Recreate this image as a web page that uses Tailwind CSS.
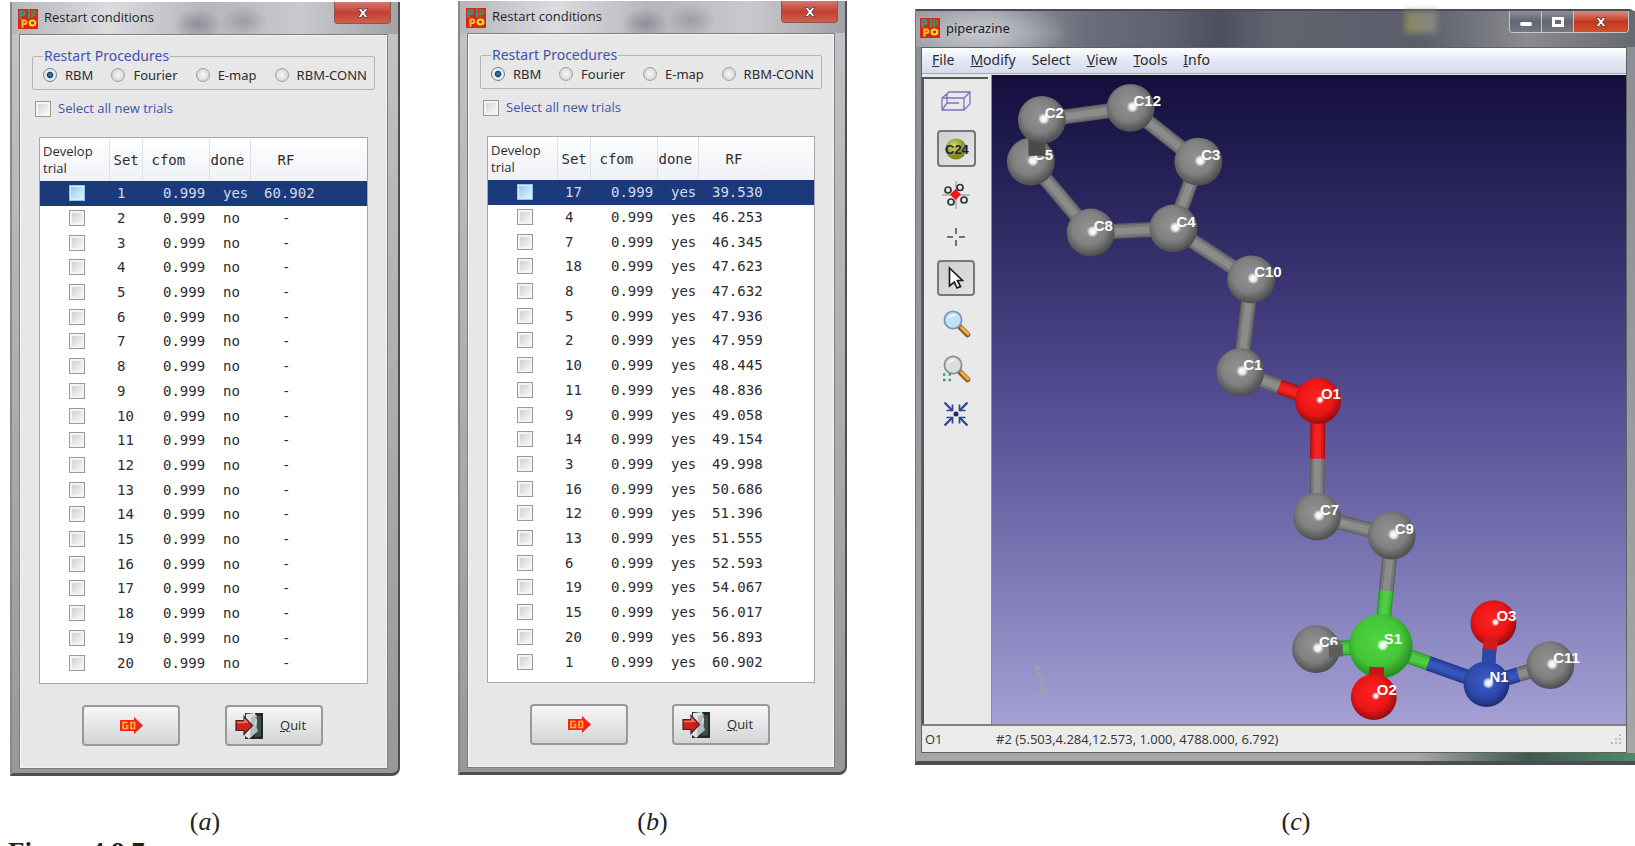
<!DOCTYPE html>
<html lang="en">
<head>
<meta charset="utf-8">
<title>Restart conditions and piperazine viewer</title>
<script src="https://cdn.jsdelivr.net/npm/@tailwindcss/browser@4"></script>
</head>
<body class="h-screen overflow-hidden bg-white font-['Open_Sans',sans-serif] text-[13px] text-[#2c2c30]">

<svg class="hidden" aria-hidden="true">
  <symbol id="logo" viewBox="0 0 20 20">
    <rect width="20" height="20" fill="#dc2417"/>
    <g fill="none" stroke-linecap="square">
      <path d="M2.500 9V2.500H5.500Q7.500 3.500 5.500 6H3.500M11 1.500V2M11 4.500V8.500" stroke="#2f9c83" stroke-width="2.200"/>
      <path d="M14 8V2.500H16.500Q18.500 4 16.500 6H15" stroke="#4e8c50" stroke-width="2"/>
      <path d="M4.500 17.500V11.500H7Q9.500 12.500 7.500 15H5.500" stroke="#f1b929" stroke-width="2.200"/>
      <ellipse cx="14.500" cy="14" rx="2.800" ry="2.500" stroke="#f3dc2f" stroke-width="2.200"/>
    </g>
  </symbol>
  <symbol id="go" viewBox="0 0 24 17">
    <path d="M1 3H15V0L24 8.500L15 17V14H1Z" fill="#f5231c"/>
    <path d="M8.500 5.500H4V11.500H8.500V8.500H6.500M12 5.500H15.500V11.500H12Z" fill="none" stroke="#f8b42c" stroke-width="1.700"/>
  </symbol>
  <symbol id="exit" viewBox="0 0 28 28">
    <rect x="10" y="1" width="18" height="26" fill="#222a26"/>
    <path d="M22 4H26V24L20 25Z" fill="#3c5344"/>
    <path d="M11 2L20 1L22 8L21 20L14 27L10 24Z" fill="#dfe4e8"/>
    <path d="M16 5L22 3L20 12L23 19L15 26" fill="#b4bcc2"/>
    <path d="M1 8.500H9V4.500L17.500 13.500L9 22.500V18.500H1Z" fill="#c9231b" stroke="#4a2020" stroke-width="1.200"/>
    <path d="M2 10.500H10V8L13 11" fill="none" stroke="#f07a62" stroke-width="1.500"/>
  </symbol>
  <symbol id="close" viewBox="0 0 14 12">
    <path d="M2 1.500H5L7 4L9 1.500H12L8.700 6L12 10.500H9L7 8L5 10.500H2L5.300 6Z" fill="#fff" stroke="#6b4a52" stroke-width="1"/>
  </symbol>
</svg>

<main class="grid grid-cols-[390fr_389fr_730fr] gap-x-[58px] pl-[10px]">
  <figure id="fig-a" class="pt-[2px]"></figure>
  <figure id="fig-b" class="pt-px"></figure>

  <figure class="pt-[9px] pl-[10px]">
    <section class="rounded-tr-md border-t-2 border-b-4 border-l border-[#4a4d54] border-l-[#777] bg-linear-to-b from-[#8b8d94] to-[#a5a6a6] pr-2 pl-[5px]">
      <header class="-mr-2 -ml-[5px] flex h-9 items-start bg-[radial-gradient(ellipse_90px_30px_at_9%_60%,#c6c8ce_0,transparent_100%),linear-gradient(90deg,#989aa2_0,#9c9ea6_10%,#6a6d7a_24%,#5c5f6e_36%,#4c4f60_42%,#62656f_50%,#5a5d6a_70%,#8a8b8e_85%,#66696f_100%)] pr-[6px] pl-[4px]">
        <svg class="mt-[7px] size-5 shrink-0"><use href="#logo"/></svg>
        <h2 class="mt-2 ml-[6px] grow font-['Noto_Sans'] text-[13px] leading-[18px] text-[#1c1c22]">piperazine</h2>
        <div class="mr-[72px] h-[22px] w-8 bg-linear-to-r from-[#8a8a58] to-[#85868a] blur-[3px]"></div>
        <div class="flex h-[22px] overflow-hidden rounded-b border border-t-0 border-[#c4c6cc]">
          <button aria-label="Minimize" class="flex w-8 items-center justify-center border-r border-[#c4c6cc] bg-linear-to-b from-[#8d8f99] via-[#62656f] to-[#767983]"><span class="mt-1 h-1 w-3 rounded-xs bg-white"></span></button>
          <button aria-label="Maximize" class="flex w-8 items-center justify-center border-r border-[#c4c6cc] bg-linear-to-b from-[#8d8f99] via-[#62656f] to-[#767983]"><span class="h-[10px] w-3 border-[3px] border-white"></span></button>
          <button aria-label="Close" class="flex w-[54px] items-center justify-center bg-linear-to-b from-[#d98a7a] via-[#c2371c] to-[#d1502c]"><svg class="h-3 w-[14px]"><use href="#close"/></svg></button>
        </div>
      </header>
      <div class="border border-[#5f6164] bg-[#e8e8e8]">
        <nav class="flex h-[26px] items-start gap-4 border-b border-[#a9aab2] bg-linear-to-b from-white via-[#e3e8f5] to-[#d5dcec] pt-[3px] pl-[10px] font-['Noto_Sans'] text-[14px] leading-[18px]">
          <button><u>F</u>ile</button>
          <button><u>M</u>odify</button>
          <button>Select</button>
          <button><u>V</u>iew</button>
          <button><u>T</u>ools</button>
          <button><u>I</u>nfo</button>
        </nav>
        <div class="flex pt-px">
          <div class="mt-[2px] flex w-[66px] shrink-0 flex-col items-center border-t-2 border-l-2 border-[#55565a] bg-[#e9e9e9] pt-[10px]">
            <button aria-label="Unit cell" class="flex h-6 w-[38px] items-center justify-center">
              <svg class="h-5 w-[30px]" viewBox="0 0 30 20" fill="none" stroke="#7a74b8" stroke-width="1.300"><path d="M1 7H23V19H1ZM1 7L8 1H29L23 7M29 1V13L23 19M6 3V12H18M6 12L1 19"/></svg>
            </button>
            <button aria-label="Atom labels" class="mt-[17px] flex h-[37px] w-[39px] items-center justify-center rounded border-2 border-[#77787b] bg-linear-to-br from-[#cfcfcf] to-[#e6e6e6]">
              <svg class="h-[22px] w-7" viewBox="0 0 28 22"><defs><radialGradient id="olive" cx=".4" cy=".35"><stop offset="0" stop-color="#d6dc6c"/><stop offset="1" stop-color="#858b22"/></radialGradient></defs><circle cx="14" cy="11" r="10.500" fill="url(#olive)"/><text x="3" y="16" font-family="Liberation Sans" font-weight="bold" font-size="13" fill="#231c48">C24</text></svg>
            </button>
            <button aria-label="Neighbours" class="mt-[13px] flex h-[30px] w-[38px] items-center justify-center">
              <svg class="size-[30px]" viewBox="0 0 30 30" fill="none"><path d="M15 1V29M1 15H29" stroke="#8a8a8a"/><path d="M14.500 9L20 14.500L14.500 20L9 14.500Z" fill="#f31414"/><g stroke="#26382f" stroke-width="1.700" fill="#e9e9e9"><circle cx="7" cy="10" r="3"/><circle cx="19" cy="7.500" r="3"/><circle cx="10" cy="22" r="3"/><circle cx="23" cy="20" r="3"/></g></svg>
            </button>
            <button aria-label="Centre" class="mt-[17px] flex h-5 w-[38px] items-center justify-center">
              <svg class="size-5" viewBox="0 0 20 20" stroke="#4a4a4a" stroke-width="1.500"><path d="M10 1V7M10 13V19M1 10H7M13 10H19"/></svg>
            </button>
            <button aria-label="Select" class="mt-[13px] flex h-[36px] w-[38px] items-center justify-center rounded border-2 border-[#77787b] bg-linear-to-br from-[#cdcdcd] to-[#e2e2e2]">
              <svg class="h-6 w-4" viewBox="0 0 16 24"><path d="M1.500 2L14.500 14.500H9.500L12.500 20.500L9 22L6.300 16.200L1.500 20Z" fill="#fff" stroke="#1d1d20" stroke-width="1.700"/></svg>
            </button>
            <button aria-label="Zoom" class="mt-[12px] flex h-[30px] w-[38px] items-center justify-center">
              <svg class="size-[29px]" viewBox="0 0 29 29"><path d="M18.500 18.500L25.500 25.500" stroke="#8a5a20" stroke-width="5.500" stroke-linecap="round"/><path d="M19.500 18.500L26 25" stroke="#f0ae45" stroke-width="3" stroke-linecap="round"/><circle cx="11" cy="11" r="8.600" fill="#bfe2f4" stroke="#7f92bb" stroke-width="1.800"/><path d="M5 10Q8 3.500 15 6Q10 7 5 10Z" fill="#f0fbff"/></svg>
            </button>
            <button aria-label="Zoom to area" class="mt-[15px] flex h-[30px] w-[38px] items-center justify-center">
              <svg class="size-[29px]" viewBox="0 0 29 29"><path d="M18.500 18.500L25.500 25.500" stroke="#8a5a20" stroke-width="5.500" stroke-linecap="round"/><path d="M19.500 18.500L26 25" stroke="#f0ae45" stroke-width="3" stroke-linecap="round"/><circle cx="11" cy="11" r="8.600" fill="#d9dedf" stroke="#8d9093" stroke-width="1.800"/><path d="M5 10Q8 3.500 15 6Q10 7 5 10Z" fill="#f9fbfb"/><path d="M1 20.500H3.500M6.500 20.500H9M1 26H3.500M6.500 26H9" stroke="#3d9c7c" stroke-width="2.400"/></svg>
            </button>
            <button aria-label="Fit view" class="mt-[18px] flex h-[26px] w-[38px] items-center justify-center">
              <svg class="size-[26px]" viewBox="0 0 26 26" fill="none" stroke="#2f4590" stroke-width="2.300"><path d="M1.500 1.500L9 9M24.500 1.500L17 9M1.500 24.500L9 17M24.500 24.500L17 17"/><path d="M3.500 9.500H9.500V3.500M22.500 9.500H16.500V3.500M3.500 16.500H9.500V22.500M22.500 16.500H16.500V22.500" stroke-width="1.700"/><circle cx="13" cy="13" r="2.500" fill="#1c2c6c" stroke="none"/></svg>
            </button>
          </div>
          <div class="ml-[3px] min-w-0 grow border-l border-[#8a8ba8] bg-linear-to-b from-[#130e3d] via-[#534c92] to-[#a4a0d4]">
            <svg id="molecule" class="block w-full" viewBox="991 74 636 651" role="img" aria-label="Ball and stick model">
              <defs>
                <radialGradient id="gC" cx=".46" cy=".42" r=".58"><stop offset="0" stop-color="#939393"/><stop offset=".6" stop-color="#808080"/><stop offset="1" stop-color="#4c4c4c"/></radialGradient>
                <radialGradient id="gO" cx=".46" cy=".42" r=".58"><stop offset="0" stop-color="#ff2424"/><stop offset=".65" stop-color="#ec1414"/><stop offset="1" stop-color="#900e12"/></radialGradient>
                <radialGradient id="gN" cx=".46" cy=".42" r=".58"><stop offset="0" stop-color="#3b5cc4"/><stop offset=".65" stop-color="#2e49ac"/><stop offset="1" stop-color="#1c2c70"/></radialGradient>
                <radialGradient id="gS" cx=".46" cy=".42" r=".58"><stop offset="0" stop-color="#52d444"/><stop offset=".65" stop-color="#43c637"/><stop offset="1" stop-color="#288a25"/></radialGradient>
                <radialGradient id="shine"><stop offset="0" stop-color="#fff"/><stop offset=".5" stop-color="#fff" stop-opacity=".85"/><stop offset="1" stop-color="#fff" stop-opacity="0"/></radialGradient>
              </defs>
            </svg>
          </div>
        </div>
        <footer class="flex h-7 items-center border-t-2 border-[#7f8088] bg-[#ecebeb] leading-4 text-[#333]">
          <span class="w-[69px] pl-[3px]">O1</span>
          <span class="grow pl-[5px]">#2 (5.503,4.284,12.573, 1.000, 4788.000, 6.792)</span>
          <svg class="mr-1 size-3" viewBox="0 0 12 12" fill="#bbb"><path d="M9 1H11V3H9ZM5 5H7V7H5ZM9 5H11V7H9ZM1 9H3V11H1ZM5 9H7V11H5ZM9 9H11V11H9Z"/></svg>
        </footer>
      </div>
      <div class="-mr-2 -ml-[5px] h-2 bg-linear-to-r from-[#a5a5a5] from-70% via-[#3f5a4c] via-85% to-[#4f8a68]"></div>
    </section>
    <figcaption class="mt-[42px] pl-[42px] text-center font-['Liberation_Serif',serif] text-[26px] leading-[30px] text-[#222]">(<i>c</i>)</figcaption>
  </figure>
</main>
<p class="pl-2 font-['Liberation_Serif',serif] text-[27px] leading-[30px] font-bold text-[#222]">Figure 4.8.7</p>

<script>
const range = [...Array(20).keys()];
const trialsA = range.map(i => i ? [i + 1, 'no', '-'] : [1, 'yes', '60.902']);
const trialsB = [[17,'39.530'],[4,'46.253'],[7,'46.345'],[18,'47.623'],[8,'47.632'],[5,'47.936'],[2,'47.959'],[10,'48.445'],[11,'48.836'],[9,'49.058'],[14,'49.154'],[3,'49.998'],[16,'50.686'],[12,'51.396'],[13,'51.555'],[6,'52.593'],[19,'54.067'],[15,'56.017'],[20,'56.893'],[1,'60.902']].map(([s, rf]) => [s, 'yes', rf]);

const row = ([set, done, rf], i) => `
  <tr class="${i ? '' : 'bg-[#1b3a7c] text-[#d5dcee]'}">
    <td class="pl-1 text-center leading-none"><input type="checkbox" aria-label="Develop trial ${set}" class="size-4 appearance-none border align-middle ${i ? 'border-[#999] bg-linear-to-br from-[#c9c9c9] to-white shadow-[inset_0_0_0_2px_#f4f4f4]' : 'border-[#8ec5e8] bg-linear-to-br from-[#8cc7ea] to-[#e8f6fd] shadow-[inset_0_0_0_1px_#d8eefa]'}"></td>
    <td class="pl-2">${set}</td>
    <td class="pl-[21px]">0.999</td>
    <td class="pl-[14px]">${done}</td>
    <td class="${rf === '-' ? 'pl-8' : 'pl-[14px]'}">${rf}</td>
  </tr>`;

const radio = (key, name, i) => `
  <label class="flex items-center gap-[8px]"><input type="radio" name="procedure-${key}" ${i ? '' : 'checked'} class="size-[14px] appearance-none rounded-full border border-[#a0a0a0] bg-[radial-gradient(#fafafa,#c8c8c8)] checked:border-[#6d7f8c] checked:bg-[radial-gradient(circle,#2aa0c8_0,#12405e_32%,#e6edf0_44%)]">${name}</label>`;

const dialog = (key, trials) => `
  <section class="rounded-br-lg border-r-2 border-b-[3px] border-l-2 border-[#4f4f52] border-l-[#8a8a8c] bg-linear-to-b from-[#c3c4c7] to-[#979899] pr-[10px] pb-1 pl-[7px]">
    <header class="-mr-[10px] -ml-[7px] flex h-8 items-start bg-[radial-gradient(ellipse_24px_16px_at_48%_70%,#8f8f98_0,transparent_100%),radial-gradient(ellipse_24px_16px_at_60%_60%,#9c9ca5_0,transparent_100%),linear-gradient(90deg,#b5b5ba,#dcdce0_25%,#b5b5ba_50%,#c9c9cd_75%,#a2a2a6)] pr-[7px] pl-[6px]">
      <svg class="mt-[7px] size-5 shrink-0"><use href="#logo"/></svg>
      <h2 class="mt-[6px] ml-[6px] grow leading-[18px] text-[#1f1f24]">Restart conditions</h2>
      <button aria-label="Close" class="flex h-[22px] w-[57px] items-center justify-center rounded-b border border-t-0 border-[#8d5550] bg-linear-to-b from-[#d3796f] via-[#c53d31] to-[#cf5f4f]"><svg class="h-3 w-[14px]"><use href="#close"/></svg></button>
    </header>
    <div class="border border-[#7c7d80] bg-[#e7e7e7] px-[12px] pt-[12px] pb-[22px] shadow-[inset_0_0_0_1px_#f5f5f5]">
      <fieldset class="h-[43px] rounded-xs border border-[#b4b4b4] pr-[7px] pl-[10px]">
        <legend class="px-px font-['Noto_Sans'] text-[14px] leading-[18px] text-[#4351ae]">Restart Procedures</legend>
        <div class="mt-px flex items-center justify-between font-['Noto_Sans'] leading-[18px]">${['RBM', 'Fourier', 'E-map', 'RBM-CONN'].map((n, i) => radio(key, n, i)).join('')}</div>
      </fieldset>
      <label class="mt-[10px] ml-[3px] flex h-[18px] items-center gap-[7px] text-[#4351ae]"><input type="checkbox" class="size-4 appearance-none border border-[#999] bg-linear-to-br from-[#d0d0d0] to-white shadow-[inset_0_0_0_2px_#f4f4f4]">Select all new trials</label>
      <div class="mt-[19px] mr-[7px] ml-[7px] border border-[#a6a7ab] bg-white pb-2">
        <table class="h-[537px] w-full table-fixed border-collapse text-left font-['DejaVu_Sans_Mono',monospace] text-[14px] leading-4">
          <colgroup><col class="w-[69px]"><col class="w-[33px]"><col class="w-[67px]"><col class="w-[41px]"><col></colgroup>
          <thead>
            <tr class="h-[43px] bg-linear-to-b from-white to-[#eff1f6]">
              <th class="border-r border-[#dfe1e8] pl-[3px] font-['Open_Sans'] text-[13px] leading-[17px] font-normal">Develop trial</th>
              <th class="border-r border-[#dfe1e8] pl-1 font-normal">Set</th>
              <th class="border-r border-[#dfe1e8] pl-[9px] font-normal">cfom</th>
              <th class="border-r border-[#dfe1e8] pl-px font-normal">done</th>
              <th class="pl-[27px] font-normal">RF</th>
            </tr>
          </thead>
          <tbody>${trials.map(row).join('')}</tbody>
        </table>
      </div>
      <div class="mt-[21px] mr-[52px] ml-[50px] flex justify-between">
        <button aria-label="Go" class="flex h-[41px] w-[98px] items-center justify-center rounded border-2 border-[#98999c] bg-linear-to-b from-[#f6f6f6] via-[#e6e6e7] to-[#d3d4d5]"><svg class="h-[17px] w-6"><use href="#go"/></svg></button>
        <button class="flex h-[41px] w-[98px] items-center rounded border-2 border-[#98999c] bg-linear-to-b from-[#f6f6f6] via-[#e6e6e7] to-[#d3d4d5] pl-2"><svg class="size-7"><use href="#exit"/></svg><span class="ml-[17px]"><u>Q</u>uit</span></button>
      </div>
    </div>
  </section>
  <figcaption class="${key === 'a' ? 'mt-[31px]' : 'mt-[32px]'} text-center font-['Liberation_Serif',serif] text-[26px] leading-[30px] text-[#222]">(<i>${key}</i>)</figcaption>`;

document.getElementById('fig-a').innerHTML = dialog('a', trialsA);
document.getElementById('fig-b').innerHTML = dialog('b', trialsB);

// Atoms: x, y, radius
const atoms = {
  C2: [1041, 119, 24], C12: [1130, 107, 24], C5: [1030, 161, 24], C3: [1198, 161, 24],
  C8: [1090, 232, 24], C4: [1173, 228, 24], C10: [1251, 279, 24], C1: [1240, 372, 24],
  O1: [1318, 401, 23], C7: [1317, 517, 24], C9: [1392, 536, 24], S1: [1381, 647, 32],
  C6: [1316, 650, 24], O2: [1374, 698, 23], O3: [1494, 624, 23], N1: [1487, 685, 23], C11: [1551, 666, 24]
};
// Shades from a stick's edge to its centre line
const tint = { C: ['#606060', '#787878', '#8c8c8c'], O: ['#a81216', '#d8181a', '#f22222'], N: ['#22368c', '#2c48a8', '#3654ba'], S: ['#2f9a2a', '#40bc36', '#50cc44'] };
const widths = [15, 12, 7];
const bond = (a, b, t = .5) => {
  const [x1, y1] = atoms[a], [x2, y2] = atoms[b];
  const m = [x1 + (x2 - x1) * t, y1 + (y2 - y1) * t];
  return widths.map((w, i) => a[0] === b[0]
    ? `<path d="M${x1} ${y1}L${x2} ${y2}" stroke="${tint[a[0]][i]}" stroke-width="${w}"/>`
    : `<path d="M${x1} ${y1}L${m}" stroke="${tint[a[0]][i]}" stroke-width="${w}"/><path d="M${m}L${x2} ${y2}" stroke="${tint[b[0]][i]}" stroke-width="${w}"/>`).join('');
};
const ball = k => {
  const [x, y, r] = atoms[k];
  return `<circle cx="${x}" cy="${y}" r="${r}" fill="url(#g${k[0]})"/><circle cx="${x + 2}" cy="${y - 1}" r="${k[0] === 'O' ? 4 : 6}" fill="url(#shine)"/>`;
};
const label = k => `<text x="${atoms[k][0] + 3}" y="${atoms[k][1] - 2}" font-family="Liberation Sans" font-weight="bold" font-size="15" fill="#fff">${k}</text>`;
document.getElementById('molecule').innerHTML +=
  [['C2','C12'],['C12','C3'],['C3','C4'],['C4','C8'],['C8','C5'],['C4','C10'],['C10','C1'],['C1','O1'],['O1','C7'],['C7','C9'],['C9','S1',.5],['S1','N1',.45],['N1','C11'],['S1','C6',.6]].map(b => bond(...b)).join('') +
  ['C5','C6','C12','C3','C8','C4','C10','C1','O1','C7','C9','S1','O3','N1','C11'].map(ball).join('') +
  label('C5') + label('C6') +
  '<path d="M1036 155V138" stroke="#4a4a4a" stroke-width="17"/><path d="M1329 652L1343 651" stroke="#5c5c5c" stroke-width="12"/>' +
  ball('C2') +
  '<path d="M1377 668L1376 685" stroke="#c4181a" stroke-width="15"/><path d="M1492 638L1490 652" stroke="#d01b1b" stroke-width="14"/><path d="M1490 650L1489 668" stroke="#2d48aa" stroke-width="14"/>' +
  ball('O2') +
  Object.keys(atoms).filter(k => k !== 'C5' && k !== 'C6').map(label).join('') +
  '<path d="M1034 667Q1041 671 1036 678Q1048 683 1037 696" fill="none" stroke="#a5a59a" stroke-width="4" stroke-dasharray="5 3" opacity=".7"/>';
</script>
</body>
</html>
